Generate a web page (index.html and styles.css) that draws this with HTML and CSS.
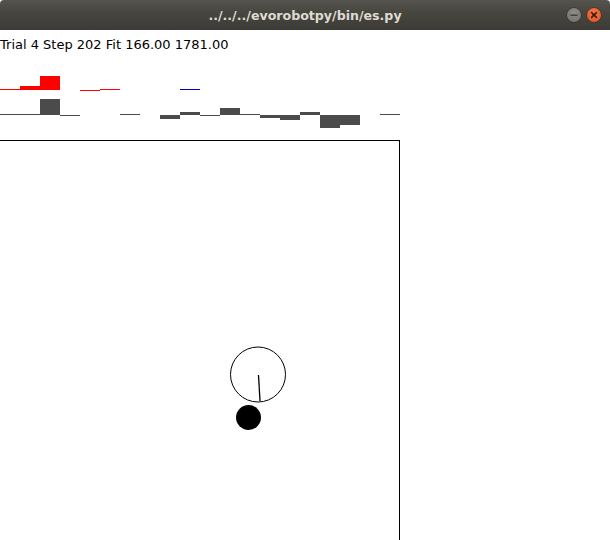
FILE: index.html
```html
<!DOCTYPE html>
<html>
<head>
<meta charset="utf-8">
<link rel="stylesheet" href="styles.css">
</head>
<body>
<div class="window">
  <header class="titlebar">
    <span class="title">../../../evorobotpy/bin/es.py</span>
    <div class="controls">
      <span class="btn btn-min"><svg width="14" height="14" viewBox="0 0 14 14"><rect x="3.5" y="6.5" width="7" height="1.4" fill="#3a3a38"/></svg></span>
      <span class="btn btn-close"><svg width="14" height="14" viewBox="0 0 14 14"><path d="M4.6 4.6 L9.4 9.4 M9.4 4.6 L4.6 9.4" stroke="#3a1a0e" stroke-width="1.5" stroke-linecap="round"/></svg></span>
    </div>
  </header>
  <div class="status">Trial 4 Step 202 Fit 166.00 1781.00</div>
  <svg class="bars" width="400" height="80" viewBox="0 0 400 80" shape-rendering="crispEdges">
    <g class="red">
      <rect x="0" y="29" width="20" height="1"/>
      <rect x="20" y="26" width="20" height="4"/>
      <rect x="40" y="16" width="20" height="14"/>
      <rect x="80" y="30" width="20" height="1"/>
      <rect x="100" y="29" width="20" height="1"/>
    </g>
    <rect class="blue" x="180" y="29" width="20" height="1"/>
    <g class="gray">
      <rect x="0" y="54" width="40" height="1"/>
      <rect x="40" y="39" width="20" height="16"/>
      <rect x="60" y="55" width="20" height="1"/>
      <rect x="120" y="54" width="20" height="1"/>
      <rect x="160" y="55" width="20" height="4"/>
      <rect x="180" y="52" width="20" height="3"/>
      <rect x="200" y="55" width="20" height="1"/>
      <rect x="220" y="48" width="20" height="7"/>
      <rect x="240" y="54" width="20" height="1"/>
      <rect x="260" y="55" width="20" height="3"/>
      <rect x="280" y="55" width="20" height="5"/>
      <rect x="300" y="52" width="20" height="3"/>
      <rect x="320" y="55" width="20" height="13"/>
      <rect x="340" y="55" width="20" height="10"/>
      <rect x="380" y="54" width="20" height="1"/>
    </g>
  </svg>
  <div class="arena">
    <svg class="arena-canvas" width="399" height="400" viewBox="0 0 399 400">
      <circle cx="258" cy="233.5" r="27.5" fill="none" stroke="#000" stroke-width="1"/>
      <line x1="258.5" y1="234" x2="260" y2="260" stroke="#000" stroke-width="1.3"/>
      <circle cx="248.5" cy="276.5" r="12.5" fill="#000"/>
    </svg>
  </div>
</div>
</body>
</html>
```

FILE: styles.css
```css
html, body {
  margin: 0;
  padding: 0;
  background: #ffffff;
  overflow: hidden;
}

.window {
  width: 610px;
  height: 540px;
  display: flex;
  flex-direction: column;
  background: #ffffff;
}

.titlebar {
  position: relative;
  height: 30px;
  flex: none;
  display: flex;
  align-items: center;
  justify-content: center;
  background: linear-gradient(to bottom, #56544f 0%, #47463f 40%, #3c3b37 100%);
  border-radius: 4px 4px 0 0;
}

.title {
  font-family: "DejaVu Sans", sans-serif;
  font-weight: bold;
  font-size: 12.6px;
  color: #dfdbd2;
  letter-spacing: 0;
}

.controls {
  position: absolute;
  right: 9px;
  top: 8px;
  display: flex;
  gap: 6px;
}

.btn {
  width: 14px;
  height: 14px;
  border-radius: 50%;
  display: flex;
}

.btn-min {
  background: radial-gradient(circle at 50% 35%, #8f8e8a, #6e6d69);
  box-shadow: 0 0 0 0.5px #2e2d2a;
}

.btn-close {
  background: radial-gradient(circle at 50% 35%, #f4774a, #e2501f);
  box-shadow: 0 0 0 0.5px #3a2a20;
}

.status {
  font-family: "DejaVu Sans", sans-serif;
  font-size: 13px;
  color: #000;
  height: 30px;
  line-height: 30px;
  padding-top: 0;
}

.bars {
  display: block;
  flex: none;
}

.red rect { fill: #ff0000; }
.blue { fill: #0000c8; }
.gray rect { fill: #4b4b4b; }

.arena {
  width: 399px;
  flex: 1;
  border-top: 1px solid #000;
  border-right: 1px solid #000;
}

.arena-canvas {
  display: block;
}
```
